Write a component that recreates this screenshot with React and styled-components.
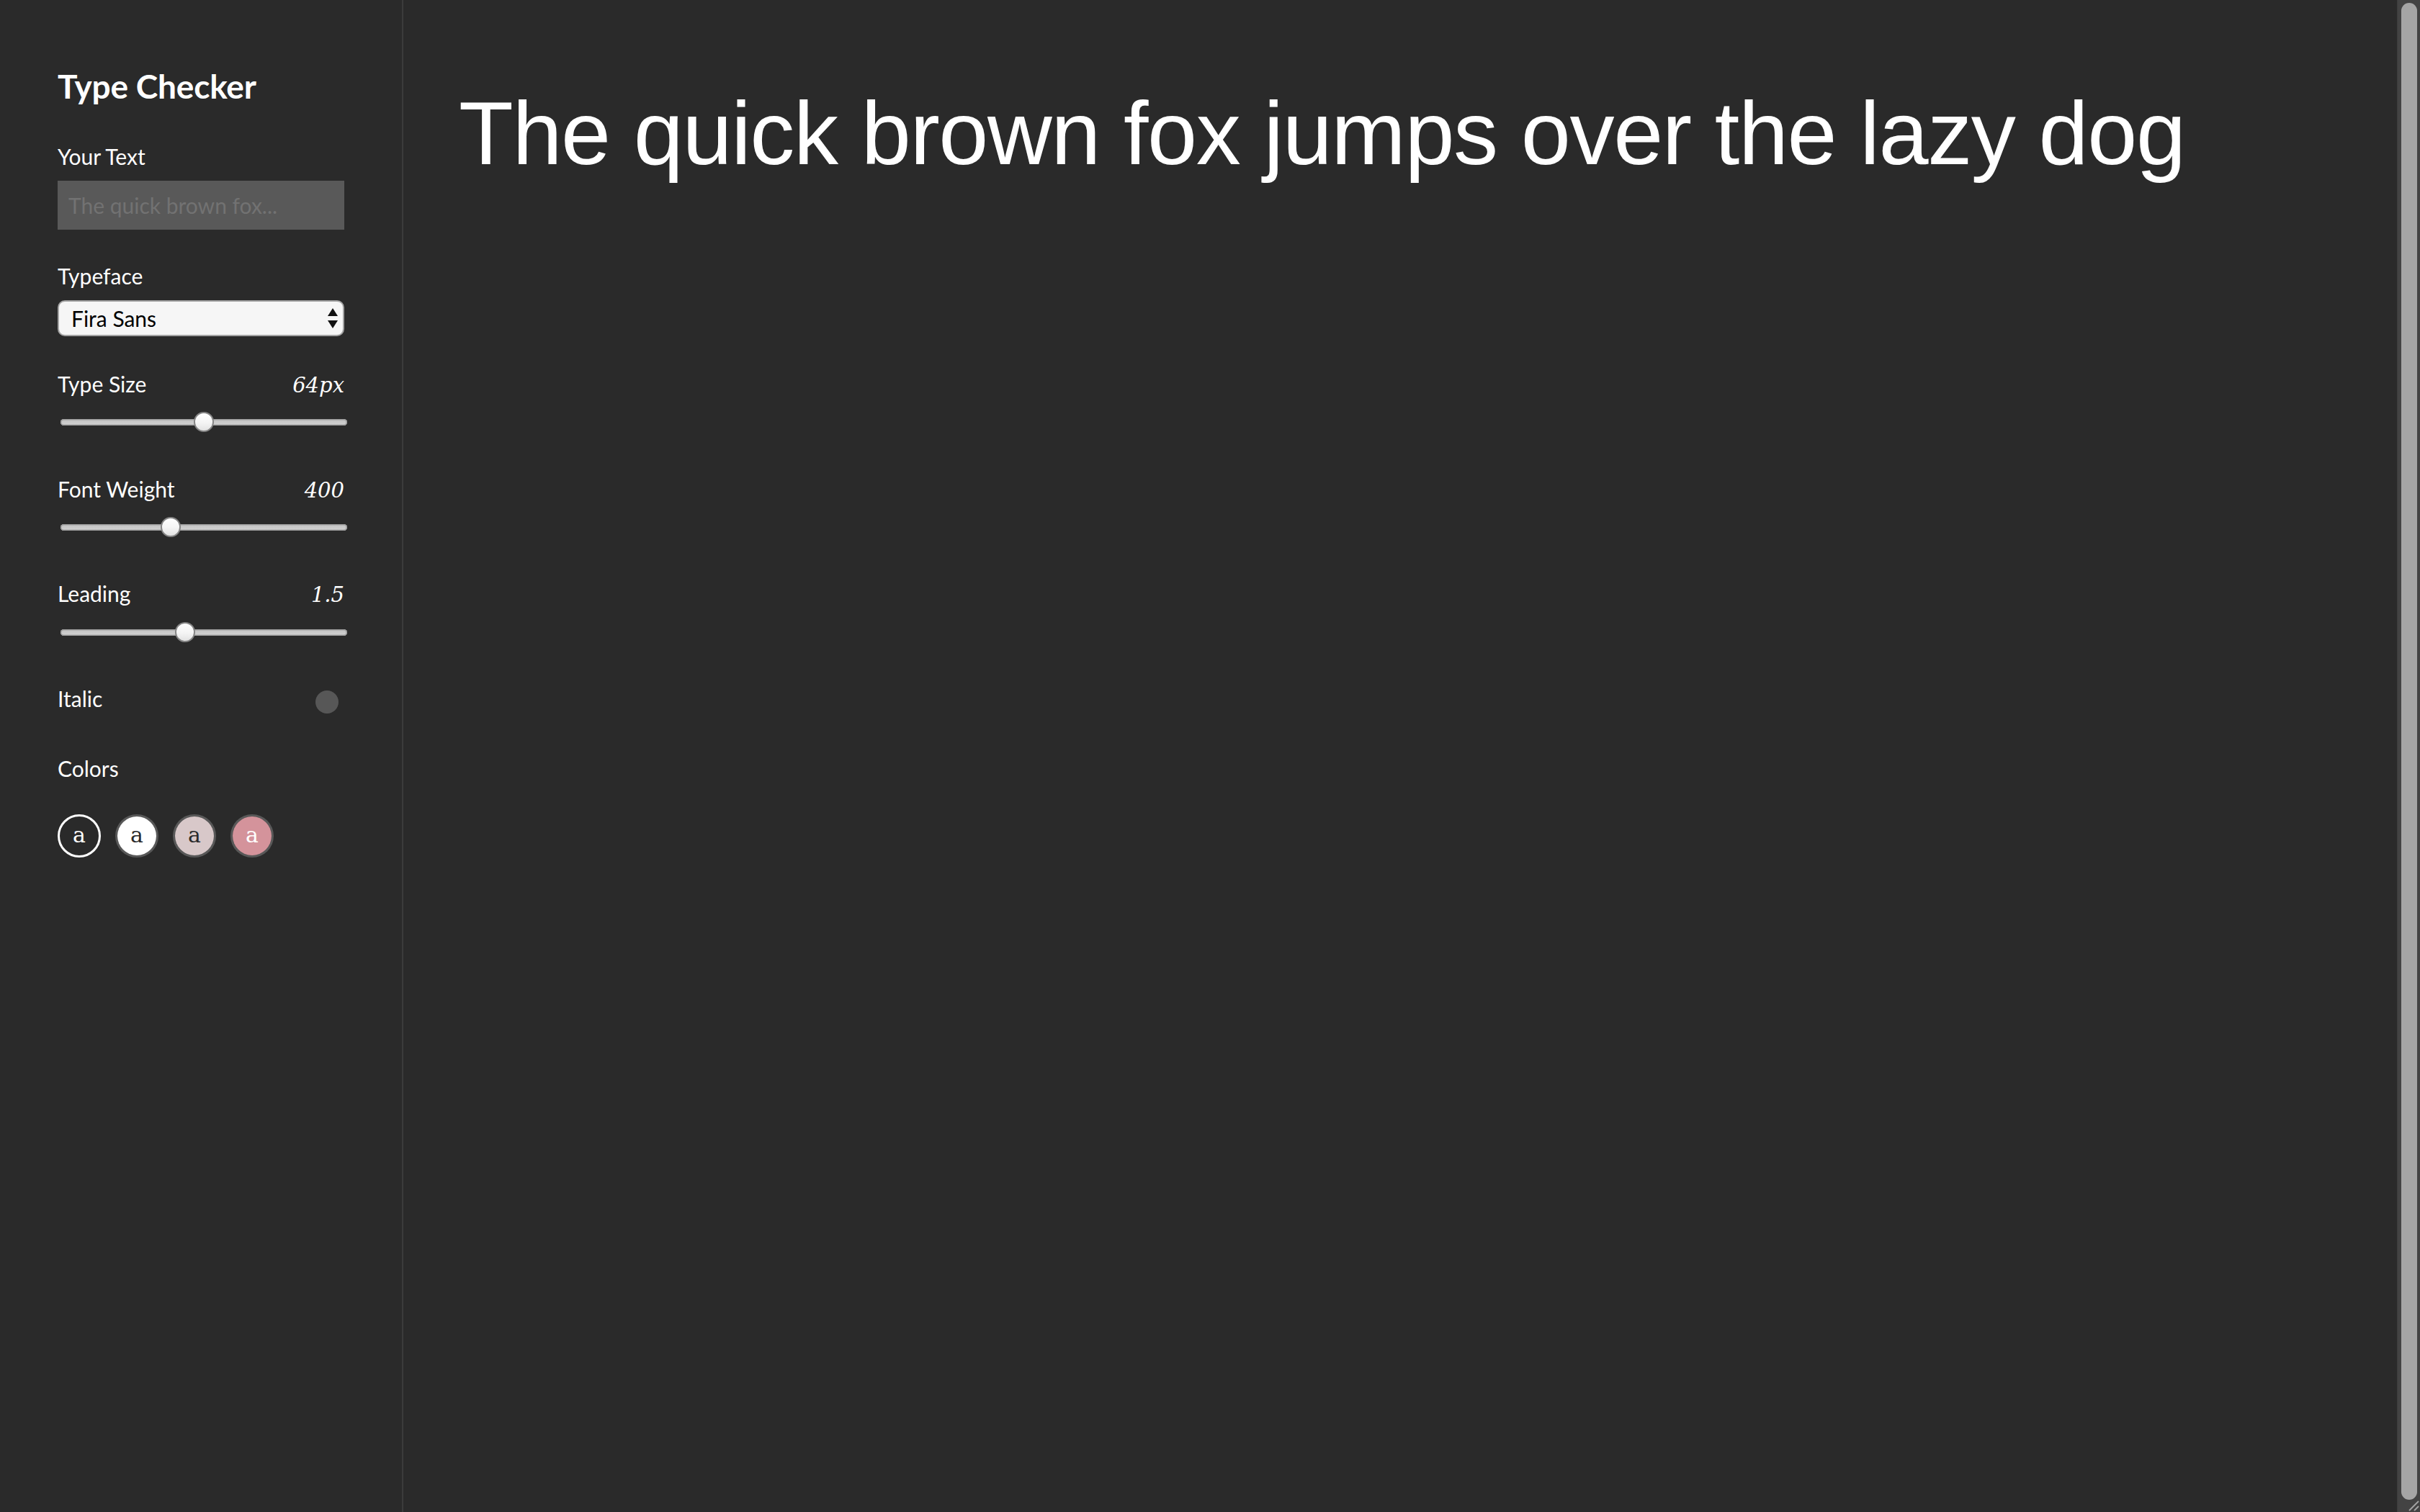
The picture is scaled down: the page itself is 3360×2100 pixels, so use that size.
import React, { useState } from "react";
import styled, { createGlobalStyle } from "styled-components";

const SCALE = 1.94;
const SAMPLE = "The quick brown fox jumps over the lazy dog";

const GlobalStyle = createGlobalStyle`
  html, body {
    margin: 0;
    padding: 0;
    background: #2a2a2a;
    height: 100%;
    overflow: hidden;
  }
  #root { height: 100%; }
  * { box-sizing: border-box; }
`;

const Layout = styled.div`
  display: grid;
  grid-template-columns: 560px 1fr;
  height: 100vh;
  background: #2a2a2a;
`;

const Sidebar = styled.aside`
  display: flex;
  flex-direction: column;
  padding: 92px 80px 0 80px;
  border-right: 2px solid #3b3b3b;
  font-family: Lato, "Open Sans", sans-serif;
  color: #ffffff;
`;

const Title = styled.h1`
  margin: 0 0 52px 0;
  font-size: 46px;
  line-height: 1.2;
  font-weight: 700;
  letter-spacing: -0.2px;
`;

const Field = styled.div`
  display: flex;
  flex-direction: column;
  margin-bottom: ${(p) => p.$mb}px;
`;

const LabelRow = styled.div`
  display: flex;
  justify-content: space-between;
  align-items: ${(p) => (p.$inline ? "flex-start" : "baseline")};
  margin-bottom: ${(p) => p.$mb || 0}px;
`;

const Label = styled.label`
  font-size: 30px;
  line-height: 36px;
  font-weight: 400;
`;

const Value = styled.span`
  font-family: "DejaVu Serif", "Liberation Serif", serif;
  font-style: italic;
  font-size: 29px;
  line-height: 36px;
  color: #ffffff;
`;

const TextInput = styled.input`
  width: 398px;
  height: 68px;
  margin: 0;
  padding: 0 15px;
  border: none;
  outline: none;
  background: #595959;
  color: #ffffff;
  font-family: Lato, sans-serif;
  font-size: 30px;
  &::placeholder { color: #727272; }
`;

const SelectWrap = styled.div`
  position: relative;
  width: 398px;
  height: 50px;
`;

const Select = styled.select`
  appearance: none;
  -webkit-appearance: none;
  width: 100%;
  height: 100%;
  margin: 0;
  padding: 0 40px 0 17px;
  border: 2px solid #a3a3a3;
  border-radius: 10px;
  background: #f6f6f6;
  color: #000000;
  font-family: Lato, sans-serif;
  font-size: 30px;
  outline: none;
`;

const SelectArrows = styled.svg`
  position: absolute;
  right: 9px;
  top: 11px;
  width: 14px;
  height: 28px;
  pointer-events: none;
`;

const Range = styled.input.attrs({ type: "range" })`
  -webkit-appearance: none;
  appearance: none;
  display: block;
  width: 398px;
  height: 28px;
  margin: 0 0 0 4px;
  background: transparent;
  &::-webkit-slider-runnable-track {
    height: 9px;
    border-radius: 5px;
    background: linear-gradient(#c2c2c2, #d3d3d3);
    box-shadow: inset 0 0 0 1.5px #9e9e9e;
  }
  &::-webkit-slider-thumb {
    -webkit-appearance: none;
    width: 28px;
    height: 28px;
    margin-top: -9.5px;
    border-radius: 50%;
    border: 2px solid #858585;
    background: linear-gradient(#ffffff 0%, #f4f4f4 55%, #e2e2e2 100%);
    box-sizing: border-box;
  }
`;

const Toggle = styled.input.attrs({ type: "checkbox" })`
  -webkit-appearance: none;
  appearance: none;
  width: 32px;
  height: 32px;
  margin: 7px 8px 0 0;
  border-radius: 50%;
  background: ${(p) => (p.checked ? "#bdbdbd" : "#575757")};
  cursor: pointer;
`;

const Swatches = styled.div`
  display: flex;
  gap: 20px;
`;

const Swatch = styled.button`
  width: 60px;
  height: 60px;
  padding: 0 0 3px 0;
  border-radius: 50%;
  border: 3px solid ${(p) => (p.$active ? "#ffffff" : "rgba(255,255,255,0.22)")};
  background: ${(p) => p.$bg};
  background-clip: ${(p) => (p.$active ? "border-box" : "padding-box")};
  color: ${(p) => p.$fg};
  font-family: "DejaVu Serif", "Liberation Serif", serif;
  font-size: 30px;
  line-height: 1;
  display: flex;
  align-items: center;
  justify-content: center;
  cursor: pointer;
`;

const Main = styled.main`
  display: flex;
  height: 100vh;
  min-width: 0;
`;

const Preview = styled.textarea`
  display: block;
  flex: 1;
  min-width: 0;
  height: 100%;
  margin: 0;
  border: none;
  outline: none;
  resize: none;
  overflow: hidden;
  padding: 92px 80px 80px 77px;
  background: ${(p) => p.$bg};
  color: ${(p) => p.$fg};
  font-family: "Liberation Sans", Arial, sans-serif;
  font-size: ${(p) => p.$size}px;
  letter-spacing: -1.4px;
  font-weight: ${(p) => p.$weight};
  line-height: ${(p) => p.$leading};
  font-style: ${(p) => (p.$italic ? "italic" : "normal")};
`;

const ScrollTrack = styled.div`
  position: relative;
  flex: 0 0 32px;
  display: flex;
  flex-direction: column;
  padding: 4px 4px 17px 6px;
  background: #434343;
  box-shadow: inset 1px 0 0 #3c3c3c;
`;

const ScrollThumb = styled.div`
  flex: 1;
  border-radius: 11px;
  background: #a5a5a5;
`;

const Grip = styled.svg`
  position: absolute;
  right: 1px;
  bottom: 1px;
  width: 16px;
  height: 16px;
`;

const COLORS = [
  { bg: "#2a2a2a", fg: "#ffffff" },
  { bg: "#ffffff", fg: "#2a2a2a" },
  { bg: "#d8c8c9", fg: "#2a2a2a" },
  { bg: "#d4939b", fg: "#ffffff" },
];

export default function App() {
  const [text, setText] = useState("");
  const [face, setFace] = useState("Fira Sans");
  const [size, setSize] = useState(64);
  const [weight, setWeight] = useState(400);
  const [leading, setLeading] = useState(1.5);
  const [italic, setItalic] = useState(false);
  const [color, setColor] = useState(0);

  const scheme = COLORS[color];

  return (
    <Layout>
      <GlobalStyle />
      <Sidebar>
        <Title>Type Checker</Title>

        <Field $mb={46}>
          <LabelRow $mb={16}>
            <Label htmlFor="your-text">Your Text</Label>
          </LabelRow>
          <TextInput
            id="your-text"
            placeholder="The quick brown fox..."
            value={text}
            onChange={(e) => setText(e.target.value)}
          />
        </Field>

        <Field $mb={48}>
          <LabelRow $mb={16}>
            <Label htmlFor="typeface">Typeface</Label>
          </LabelRow>
          <SelectWrap>
            <Select id="typeface" value={face} onChange={(e) => setFace(e.target.value)}>
              <option>Fira Sans</option>
              <option>Lato</option>
              <option>Roboto</option>
              <option>Open Sans</option>
            </Select>
            <SelectArrows viewBox="0 0 14 28">
              <polygon points="7,0 14,11 0,11" fill="#111" />
              <polygon points="0,17 14,17 7,28" fill="#111" />
            </SelectArrows>
          </SelectWrap>
        </Field>

        <Field $mb={61}>
          <LabelRow $mb={19}>
            <Label>Type Size</Label>
            <Value>{size}px</Value>
          </LabelRow>
          <Range min={8} max={120} value={size} onChange={(e) => setSize(+e.target.value)} />
        </Field>

        <Field $mb={60}>
          <LabelRow $mb={19}>
            <Label>Font Weight</Label>
            <Value>{weight}</Value>
          </LabelRow>
          <Range min={100} max={900} step={100} value={weight} onChange={(e) => setWeight(+e.target.value)} />
        </Field>

        <Field $mb={60}>
          <LabelRow $mb={20}>
            <Label>Leading</Label>
            <Value>{leading}</Value>
          </LabelRow>
          <Range min={0} max={3.5} step={0.1} value={leading} onChange={(e) => setLeading(+e.target.value)} />
        </Field>

        <Field $mb={58}>
          <LabelRow $inline>
            <Label>Italic</Label>
            <Toggle checked={italic} onChange={(e) => setItalic(e.target.checked)} />
          </LabelRow>
        </Field>

        <Field $mb={0}>
          <LabelRow $mb={46}>
            <Label>Colors</Label>
          </LabelRow>
          <Swatches>
            {COLORS.map((c, i) => (
              <Swatch
                key={i}
                $bg={c.bg}
                $fg={c.fg}
                $active={i === color}
                onClick={() => setColor(i)}
              >
                a
              </Swatch>
            ))}
          </Swatches>
        </Field>
      </Sidebar>

      <Main>
        <Preview
          readOnly
          value={text || SAMPLE}
          $bg={scheme.bg}
          $fg={scheme.fg}
          $size={size * SCALE}
          $weight={weight}
          $leading={leading}
          $italic={italic}
        />
        <ScrollTrack aria-hidden="true">
          <ScrollThumb />
          <Grip viewBox="0 0 16 16">
            <line x1="2" y1="15" x2="15" y2="2" stroke="#a3a3a3" strokeWidth="2" />
            <line x1="9" y1="15" x2="15" y2="9" stroke="#a3a3a3" strokeWidth="2" />
          </Grip>
        </ScrollTrack>
      </Main>
    </Layout>
  );
}
